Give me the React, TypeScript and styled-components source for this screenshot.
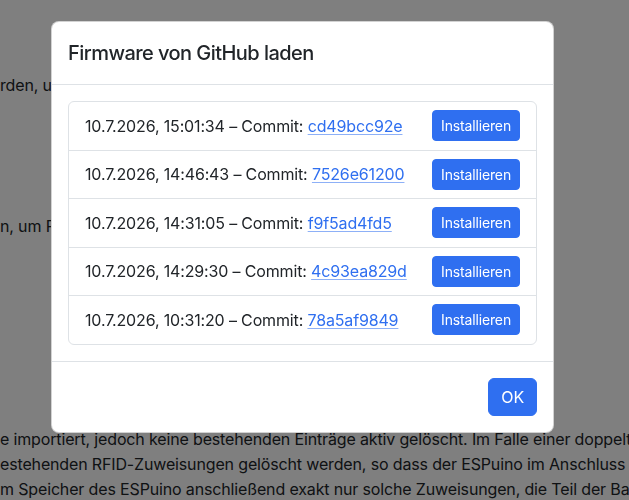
import React from 'react';
import styled, { createGlobalStyle } from 'styled-components';

const GlobalStyle = createGlobalStyle`
  html, body {
    margin: 0;
    padding: 0;
  }
  body {
    width: 629px;
    height: 500px;
    overflow: hidden;
    background: #fff;
    color: #212529;
    font-family: Inter, "Liberation Sans", Arial, sans-serif;
    font-size: 16px;
    line-height: 1.5;
    letter-spacing: -0.15px;
  }
`;

const Page = styled.div`
  display: flex;
  flex-direction: column;
  padding-top: 73px;
`;

const Line = styled.div<{ $gap?: number }>`
  white-space: nowrap;
  overflow: hidden;
  height: 25px;
  line-height: 25px;
  margin-top: ${(p) => p.$gap ?? 0}px;
`;

const Backdrop = styled.div`
  position: fixed;
  inset: 0;
  background: rgba(0, 0, 0, 0.5);
`;

const Dialog = styled.div`
  position: fixed;
  top: 21px;
  left: 51px;
  width: 503px;
  box-sizing: border-box;
  background: #fff;
  border: 1px solid rgba(0, 0, 0, 0.175);
  border-radius: 8px;
  display: flex;
  flex-direction: column;
`;

const Header = styled.div`
  padding: 16px;
  border-bottom: 1px solid #dee2e6;
`;

const Title = styled.h5`
  margin: 0;
  font-size: 20px;
  font-weight: 500;
  line-height: 30px;
  letter-spacing: -0.55px;
`;

const Body = styled.div`
  padding: 16px;
`;

const ListGroup = styled.ul`
  list-style: none;
  margin: 0;
  padding: 0;
  border: 1px solid #dee2e6;
  border-radius: 6px;
`;

const Item = styled.li`
  display: flex;
  align-items: center;
  justify-content: space-between;
  padding: 8px 16px 8.5px;
  & + & {
    border-top: 1px solid #dee2e6;
  }
`;

const Commit = styled.a`
  color: #2f6ff0;
  text-decoration: underline;
  text-decoration-color: rgba(47, 111, 240, 0.55);
  text-underline-offset: 2px;
`;

const Button = styled.button<{ $small?: boolean }>`
  font-family: inherit;
  letter-spacing: inherit;
  background: #2f6ff0;
  color: #fff;
  border: 1px solid #2f6ff0;
  border-radius: ${(p) => (p.$small ? 4 : 6)}px;
  font-size: ${(p) => (p.$small ? 14 : 16)}px;
  line-height: ${(p) => (p.$small ? 21 : 24)}px;
  padding: ${(p) => (p.$small ? '4px 8px' : '6px 12px')};
  cursor: pointer;
`;

const Footer = styled.div`
  display: flex;
  justify-content: flex-end;
  padding: 12px;
  border-top: 1px solid #dee2e6;
  & > ${Button} {
    margin: 4px;
  }
`;

const releases = [
  { date: '10.7.2026, 15:01:34', sha: 'cd49bcc92e' },
  { date: '10.7.2026, 14:46:43', sha: '7526e61200' },
  { date: '10.7.2026, 14:31:05', sha: 'f9f5ad4fd5' },
  { date: '10.7.2026, 14:29:30', sha: '4c93ea829d' },
  { date: '10.7.2026, 10:31:20', sha: '78a5af9849' },
];

export default function App() {
  return (
    <>
      <GlobalStyle />
      <Page>
        <Line>rden, um die neueste Firmware direkt zu installieren.</Line>
        <Line $gap={116}>n, um RFID-Zuweisungen zu sichern oder wiederherzustellen.</Line>
        <Line $gap={188}>
          e importiert, jedoch keine bestehenden Einträge aktiv gelöscht. Im Falle einer doppelten Zuweisung
        </Line>
        <Line>estehenden RFID-Zuweisungen gelöscht werden, so dass der ESPuino im Anschluss keine</Line>
        <Line>m Speicher des ESPuino anschließend exakt nur solche Zuweisungen, die Teil der Backup-Datei sind.</Line>
      </Page>
      <Backdrop />
      <Dialog>
        <Header>
          <Title>Firmware von GitHub laden</Title>
        </Header>
        <Body>
          <ListGroup>
            {releases.map((r) => (
              <Item key={r.sha}>
                <span>
                  {r.date} – Commit: <Commit href="#">{r.sha}</Commit>
                </span>
                <Button $small>Installieren</Button>
              </Item>
            ))}
          </ListGroup>
        </Body>
        <Footer>
          <Button>OK</Button>
        </Footer>
      </Dialog>
    </>
  );
}
